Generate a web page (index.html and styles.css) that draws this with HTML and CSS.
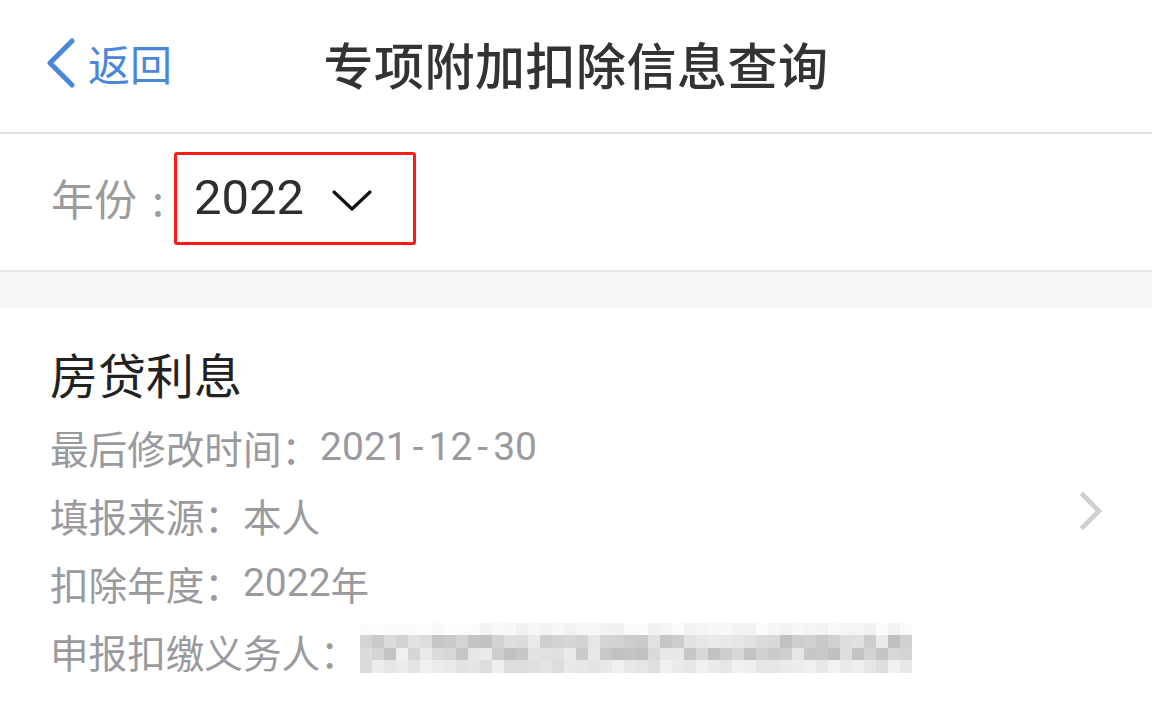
FILE: index.html
```html
<!DOCTYPE html>
<html lang="zh-CN">
<head>
<meta charset="utf-8">
<title>专项附加扣除信息查询</title>
<link rel="stylesheet" href="styles.css">
</head>
<body>
<header class="nav">
  <div class="back">
    <svg class="back-icon" width="30" height="50" viewBox="0 0 30 50"><path d="M26 3 L4 25 L26 47" fill="none" stroke="#4a86d9" stroke-width="5" stroke-linecap="round" stroke-linejoin="round"/></svg>
    <span class="back-text">返回</span>
  </div>
  <h1 class="title">专项附加扣除信息查询</h1>
</header>

<section class="year-row">
  <span class="year-label">年份<span class="colon">:</span></span>
  <div class="year-select">
    <span class="year-value">2022</span>
    <svg class="caret" width="42" height="26" viewBox="0 0 42 26"><path d="M3 4 L21 21 L39 4" fill="none" stroke="#111" stroke-width="3.2" stroke-linecap="round" stroke-linejoin="round"/></svg>
  </div>
</section>

<div class="gap"></div>

<section class="card">
  <div class="card-body">
    <div class="card-title">房贷利息</div>
    <div class="info">最后修改时间：<span class="num">2021<span class="dash">-</span>12<span class="dash">-</span>30</span></div>
    <div class="info">填报来源：本人</div>
    <div class="info">扣除年度：<span class="num">2022</span>年</div>
    <div class="info agent">申报扣缴义务人：<span class="mosaic" id="mosaic"></span></div>
  </div>
  <svg class="arrow" width="26" height="40" viewBox="0 0 26 40"><path d="M4 4 L20 20 L4 36" fill="none" stroke="#d0d0d0" stroke-width="4.8" stroke-linecap="square"/></svg>
</section>
<script src="script.js"></script>
</body>
</html>
```

FILE: styles.css
```css
* { box-sizing: border-box; }
html, body { margin: 0; padding: 0; background: #ffffff; }
body {
  width: 1152px;
  height: 718px;
  overflow: hidden;
  font-family: Roboto, "Noto Sans CJK SC", sans-serif;
}
.nav {
  position: relative;
  height: 134px;
  border-bottom: 2px solid #e2e2e2;
  display: flex;
  align-items: center;
  justify-content: center;
}
.back {
  position: absolute;
  left: 46px;
  top: 38px;
  display: flex;
  align-items: center;
  gap: 12px;
}
.back-icon { display: block; }
.back-text {
  font-family: "Noto Sans CJK SC", sans-serif;
  font-size: 42px;
  line-height: 50px;
  color: #4a86d9;
}
.title {
  margin: 0;
  margin-top: -6px;
  font-family: "Noto Sans CJK SC", sans-serif;
  font-weight: 500;
  font-size: 50px;
  color: #333333;
  letter-spacing: 0.5px;
}
.year-row {
  height: 138px;
  border-bottom: 2px solid #e6e6e6;
  display: flex;
  align-items: flex-start;
  padding: 18px 0 0 51px;
}
.year-label {
  font-family: "Noto Sans CJK SC", sans-serif;
  font-size: 43px;
  line-height: 91px;
  color: #9b9b9b;
  margin-right: 10px;
}
.colon { margin-left: 15px; }
.year-select {
  width: 242px;
  height: 93px;
  border: 3px solid #ff1a1a;
  border-radius: 3px;
  display: flex;
  align-items: center;
  padding-left: 17px;
}
.year-value {
  font-family: Roboto, sans-serif;
  font-size: 49px;
  color: #2e2e2e;
  margin-top: -2px;
}
.caret { margin-left: 27px; margin-top: 4px; }
.gap {
  height: 36px;
  background: #f5f6f8;
}
.card {
  display: flex;
  align-items: center;
  justify-content: space-between;
  padding: 35px 47px 40px 50px;
}
.card-title {
  font-family: "Noto Sans CJK SC", sans-serif;
  font-size: 48px;
  line-height: 60px;
  color: #222222;
  margin-bottom: 10px;
}
.info {
  font-family: "Noto Sans CJK SC", sans-serif;
  font-size: 38.6px;
  line-height: 68px;
  color: #9a9a9e;
  white-space: nowrap;
  display: flex;
  align-items: center;
}
.num {
  font-family: Roboto, sans-serif;
  font-size: 39px;
  color: #9a9a9e;
}
.dash { margin: 0 5px; }
.mosaic {
  display: grid;
  grid-template-columns: repeat(46, 12px);
  grid-auto-rows: 12.5px;
  margin-left: 1px;
  margin-top: -7px;
}
.mosaic span { display: block; }
.arrow { display: block; margin-top: -6px; }
```

FILE: script.js
```js
(function () {
  var el = document.getElementById('mosaic');
  var seed = 7;
  function rnd() { seed = (seed * 9301 + 49297) % 233280; return seed / 233280; }
  var rows = [
    [240, 252],
    [192, 236],
    [192, 240],
    [220, 242]
  ];
  for (var r = 0; r < 4; r++) {
    for (var c = 0; c < 46; c++) {
      var lo = rows[r][0], hi = rows[r][1];
      if (r === 0 && c < 10) { lo = 250; hi = 255; }
      var v = Math.round(lo + (hi - lo) * rnd());
      var s = document.createElement('span');
      s.style.background = 'rgb(' + v + ',' + v + ',' + (v + 3 > 255 ? 255 : v + 3) + ')';
      el.appendChild(s);
    }
  }
})();
```
